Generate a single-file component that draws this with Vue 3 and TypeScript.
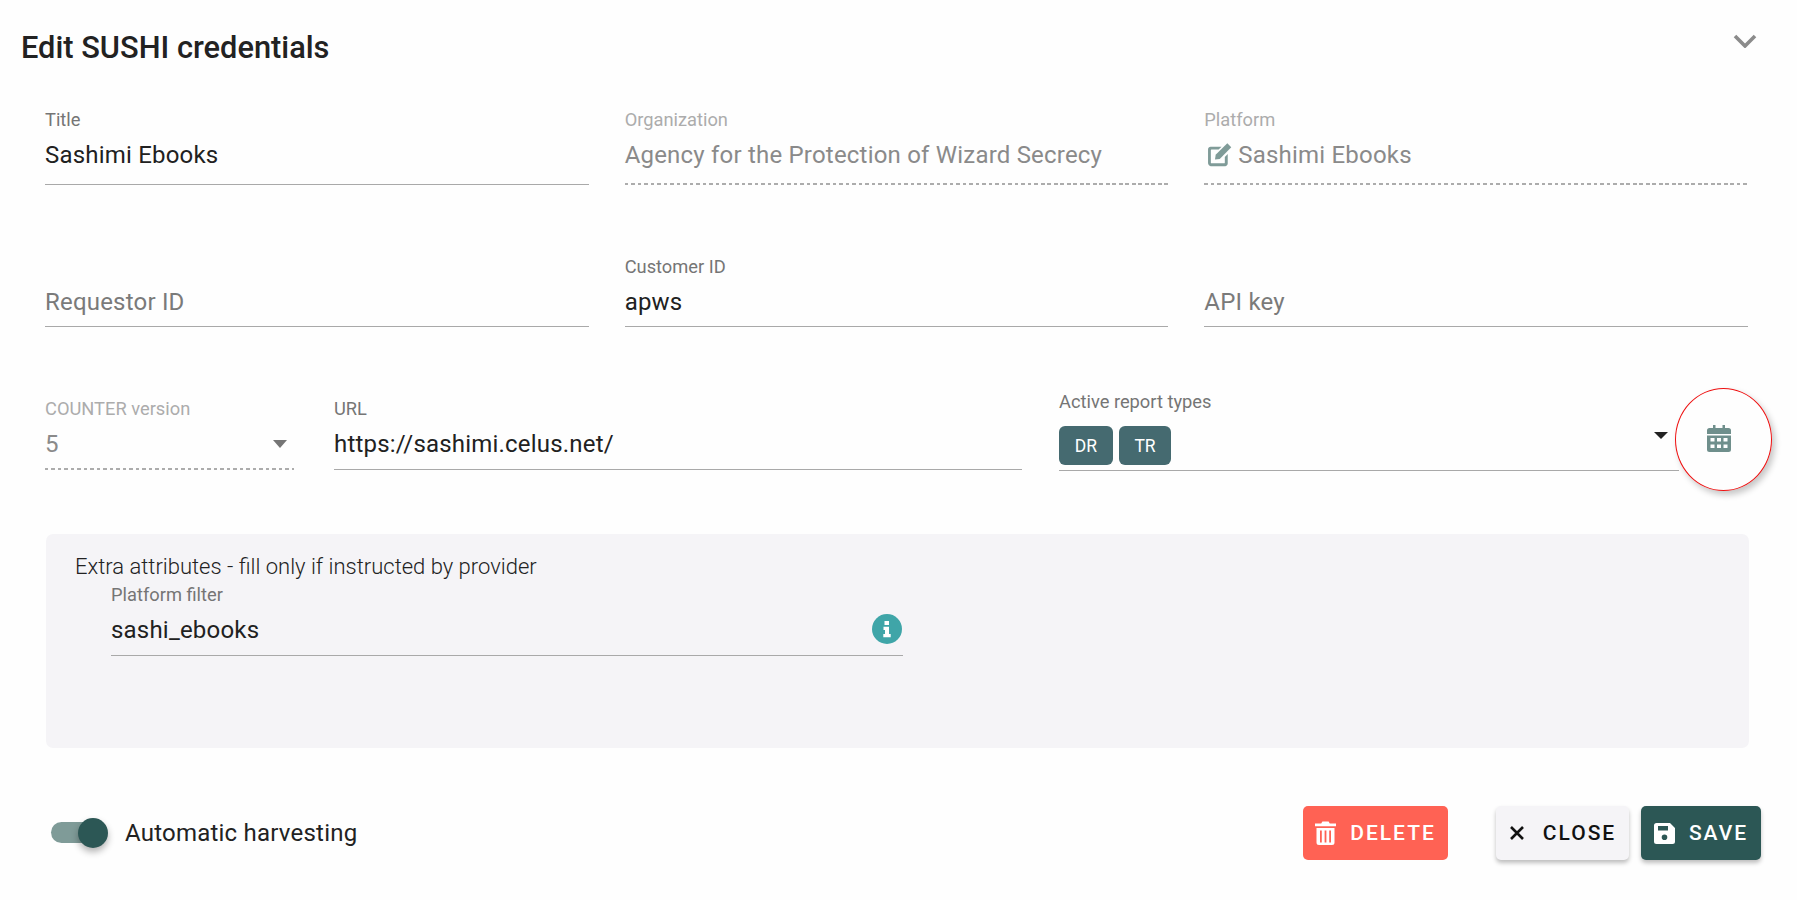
<script setup lang="ts">
const topRow = [
  { label: 'Title', value: 'Sashimi Ebooks', kind: 'normal' },
  { label: 'Organization', value: 'Agency for the Protection of Wizard Secrecy', kind: 'disabled' },
  { label: 'Platform', value: 'Sashimi Ebooks', kind: 'disabled', icon: true },
]
const secondRow = [
  { label: '', value: 'Requestor ID', kind: 'placeholder' },
  { label: 'Customer ID', value: 'apws', kind: 'normal' },
  { label: '', value: 'API key', kind: 'placeholder' },
]
</script>

<template>
  <main class="page">
    <header class="head">
      <h1 class="title">Edit SUSHI credentials</h1>
      <svg class="chevron" viewBox="0 0 24 14"><path d="M2 2 12 12 22 2" fill="none" stroke="#8b8b8b" stroke-width="3.6" /></svg>
    </header>

    <section class="grid">
      <div v-for="f in topRow" :key="f.label" class="field" :class="f.kind">
        <label class="label">{{ f.label }}</label>
        <div class="value">
          <svg v-if="f.icon" class="edit" viewBox="0 0 24 24">
            <path d="M3.500 4.500h10.500l-2.800 2.800H4.300a.6.6 0 0 0-.6.6v12c0 .3.3.6.6.6h12.200c.3 0 .6-.3.6-.6v-5.600l2.800-2.800v9.200c0 1.400-1.100 2.500-2.500 2.500H3.500C2.100 22.600 1 21.500 1 20.100V7C1 5.600 2.100 4.500 3.500 4.500Z" fill="#7f9b98" />
            <path d="M19.500 1.300 23.300 5.100 12.200 16.200 7.700 16.800 8.300 12.300Z" fill="#7f9b98" />
          </svg>
          <span>{{ f.value }}</span>
        </div>
      </div>
      <div v-for="f in secondRow" :key="f.value" class="field second" :class="f.kind">
        <label class="label">{{ f.label }}</label>
        <div class="value">{{ f.value }}</div>
      </div>
    </section>

    <section class="row3">
      <div class="field disabled counter">
        <label class="label">COUNTER version</label>
        <div class="value split"><span>5</span><i class="caret grey"></i></div>
      </div>
      <div class="field normal url">
        <label class="label">URL</label>
        <div class="value">https://sashimi.celus.net/</div>
      </div>
      <div class="field normal reports">
        <label class="label">Active report types</label>
        <div class="chips">
          <span class="chip dr">DR</span>
          <span class="chip tr">TR</span>
          <i class="caret dark"></i>
        </div>
      </div>
      <div class="cal-wrap">
        <svg class="cal" viewBox="0 0 24 27">
          <path fill="#6f8f8c" fill-rule="evenodd" d="M6 0h2.500v3h7V0H18v3h3.500A2.500 2.500 0 0 1 24 5.500V9H0V5.500A2.500 2.500 0 0 1 2.500 3H6ZM0 10.500h24V24.500A2.500 2.500 0 0 1 21.500 27H2.500A2.500 2.500 0 0 1 0 24.500ZM3.500 13v3.500h4V13Zm6.500 0v3.500h4V13Zm6.500 0v3.500h4V13ZM3.500 19.500V23h4v-3.500Zm6.500 0V23h4v-3.500Zm6.500 0V23h4v-3.500Z" />
        </svg>
        <span class="ring"></span>
      </div>
    </section>

    <section class="panel">
      <p class="panel-title">Extra attributes - fill only if instructed by provider</p>
      <div class="field normal filter">
        <label class="label">Platform filter</label>
        <div class="value split">
          <span>sashi_ebooks</span>
          <svg class="info" viewBox="0 0 30 30">
            <circle cx="15" cy="15" r="15" fill="#3fa5a8" />
            <path fill="#fff" d="M12.500 7h4.500v4h-4.500ZM11.500 12.800h5.500v7.200h1.700v3.200h-7.400V20h1.700v-4h-1.500Z" />
          </svg>
        </div>
      </div>
    </section>

    <footer class="foot">
      <div class="toggle"><span class="track"></span><span class="thumb"></span></div>
      <span class="toggle-label">Automatic harvesting</span>
      <span class="grow"></span>
      <button class="btn delete">
        <svg viewBox="0 0 21 24"><path fill="#fff" fill-rule="evenodd" d="M0 2.500h6.200L7.400.5h6.200l1.200 2h6.200v2.800H0ZM1.500 7h18v14.500A2.500 2.500 0 0 1 17 24H4a2.500 2.500 0 0 1-2.500-2.500ZM5 9.500v12h1.800v-12Zm4.600 0v12h1.800v-12Zm4.600 0v12H16v-12Z" /></svg>
        DELETE
      </button>
      <button class="btn close">
        <svg viewBox="0 0 16 16"><path d="M2 2 14 14M14 2 2 14" stroke="#111" stroke-width="2.600" fill="none" /></svg>
        CLOSE
      </button>
      <button class="btn save">
        <svg viewBox="0 0 21 21"><path fill="#fff" fill-rule="evenodd" d="M2.500 0H16l5 5v13.500a2.500 2.500 0 0 1-2.500 2.500h-16A2.500 2.500 0 0 1 0 18.500v-16A2.500 2.500 0 0 1 2.500 0ZM4 3v4.500h10V3ZM10.500 11.500a2.800 2.800 0 1 0 0 5.600 2.800 2.800 0 0 0 0-5.600Z" /></svg>
        SAVE
      </button>
    </footer>
  </main>
</template>

<style>
html, body { background: #fefefe; }
</style>

<style scoped>
.page {
  box-sizing: border-box;
  width: 1797px;
  height: 900px;
  padding: 0 49px 0 45px;
  font-family: Roboto, "Liberation Sans", sans-serif;
  color: #212121;
  overflow: hidden;
}
.head {
  position: relative;
  height: 110px;
}
.title {
  margin: 0 0 0 -24px;
  padding-top: 31px;
  font-size: 30.800px;
  line-height: 34px;
  font-weight: 500;
  color: #222;
}
.chevron {
  position: absolute;
  right: -9px;
  top: 34px;
  width: 24px;
  height: 14px;
}
.grid {
  display: grid;
  grid-template-columns: repeat(3, 1fr);
  column-gap: 36px;
  row-gap: 72px;
}
.field {
  min-width: 0;
  border-bottom: 1px solid #a9a9a9;
  padding-bottom: 10px;
}
.second {
  padding-bottom: 5px;
}
.label {
  display: block;
  height: 20px;
  line-height: 20px;
  font-size: 18.300px;
  color: #757575;
  white-space: nowrap;
}
.value {
  display: flex;
  align-items: center;
  margin-top: 6px;
  height: 38px;
  font-size: 24px;
  letter-spacing: 0.2px;
  color: #212121;
  white-space: nowrap;
}
.disabled {
  border-bottom: 0;
  padding-bottom: 11px;
  background: repeating-linear-gradient(to right, #acacac 0 3.500px, transparent 3.500px 6.500px) left bottom / 100% 2px no-repeat;
}
.disabled .label { color: #acacac; }
.disabled .value { color: #8a8a8a; }
.placeholder .value { color: #7a7a7a; }
.edit {
  width: 25px;
  height: 25px;
  margin: -2px 6px 0 3px;
}
.row3 {
  display: flex;
  margin-top: 72px;
  height: 80px;
  position: relative;
}
.counter {
  width: 249px;
  height: 71px;
  flex: none;
  box-sizing: border-box;
}
.url {
  width: 688px;
  height: 71px;
  margin-left: 40px;
  flex: none;
  box-sizing: border-box;
}
.reports {
  width: 620px;
  height: 79px;
  box-sizing: border-box;
  margin: -7px 0 0 37px;
  flex: none;
  padding-bottom: 4px;
}
.split {
  justify-content: space-between;
}
.chips {
  position: relative;
  display: flex;
  gap: 6px;
  margin-top: 14px;
}
.chip {
  display: flex;
  align-items: center;
  justify-content: center;
  height: 39px;
  border-radius: 6px;
  background: #456a70;
  color: #fff;
  font-size: 17.500px;
  font-weight: 400;
}
.dr { width: 54px; }
.tr { width: 52px; }
.caret {
  display: block;
  width: 0;
  height: 0;
  border-left: 7px solid transparent;
  border-right: 7px solid transparent;
  border-top: 8px solid #757575;
}
.grey { margin-right: 7px; }
.dark {
  position: absolute;
  right: 11.500px;
  top: 6px;
  border-left-width: 7px;
  border-right-width: 7px;
  border-top: 7.500px solid #222;
}
.cal-wrap {
  position: absolute;
  left: 1630px;
  top: -11px;
  width: 97px;
  height: 103px;
}
.cal {
  position: absolute;
  left: 32px;
  top: 37px;
  width: 24px;
  height: 27px;
}
.ring {
  position: absolute;
  inset: 0;
  border: 1.500px solid #ee1010;
  border-radius: 50%;
  box-sizing: border-box;
  box-shadow: 3px 4px 6px rgba(0, 0, 0, 0.22);
}
.panel {
  box-sizing: border-box;
  height: 214px;
  margin: 55px -1px 0 1px;
  padding: 21px 30px 0 29px;
  border-radius: 7px;
  background: #f5f4f7;
}
.panel-title {
  margin: 0;
  font-size: 22px;
  line-height: 24px;
  font-weight: 300;
  color: #222;
}
.filter {
  width: 792px;
  margin: 6px 0 0 36px;
  padding-bottom: 6px;
}
.info {
  width: 30px;
  height: 30px;
  margin: -2px 1px 0 0;
}
.foot {
  display: flex;
  align-items: center;
  margin: 58px -13px 0 6px;
  height: 54px;
}
.toggle {
  position: relative;
  width: 57px;
  height: 30px;
  flex: none;
}
.track {
  position: absolute;
  left: 0;
  top: 4px;
  width: 50px;
  height: 21px;
  border-radius: 11px;
  background: #7f9b98;
}
.thumb {
  position: absolute;
  left: 27px;
  top: 0;
  width: 30px;
  height: 30px;
  border-radius: 50%;
  background: #2c5755;
  box-shadow: 0 4px 7px rgba(0, 0, 0, 0.3);
}
.toggle-label {
  margin-left: 17px;
  font-size: 24px;
  letter-spacing: 0.22px;
  color: #222;
}
.grow { flex: 1; }
.btn {
  display: flex;
  align-items: center;
  justify-content: center;
  height: 54px;
  border: 0;
  border-radius: 5px;
  font-family: inherit;
  font-size: 21px;
  font-weight: 500;
  letter-spacing: 2px;
  color: #fff;
}
.btn svg { flex: none; }
.delete {
  width: 145px;
  background: #ff6254;
}
.delete svg { width: 21px; height: 24px; margin-right: 14px; }
.close {
  width: 133px;
  margin-left: 48px;
  color: #111;
  background: #f5f4f7;
  box-shadow: 0 3px 4px rgba(0, 0, 0, 0.25);
}
.close svg { width: 16px; height: 16px; margin-right: 18px; }
.save {
  width: 120px;
  margin-left: 12px;
  background: #2c5755;
  box-shadow: 0 3px 4px rgba(0, 0, 0, 0.25);
}
.save svg { width: 21px; height: 21px; margin-right: 14px; }
</style>
